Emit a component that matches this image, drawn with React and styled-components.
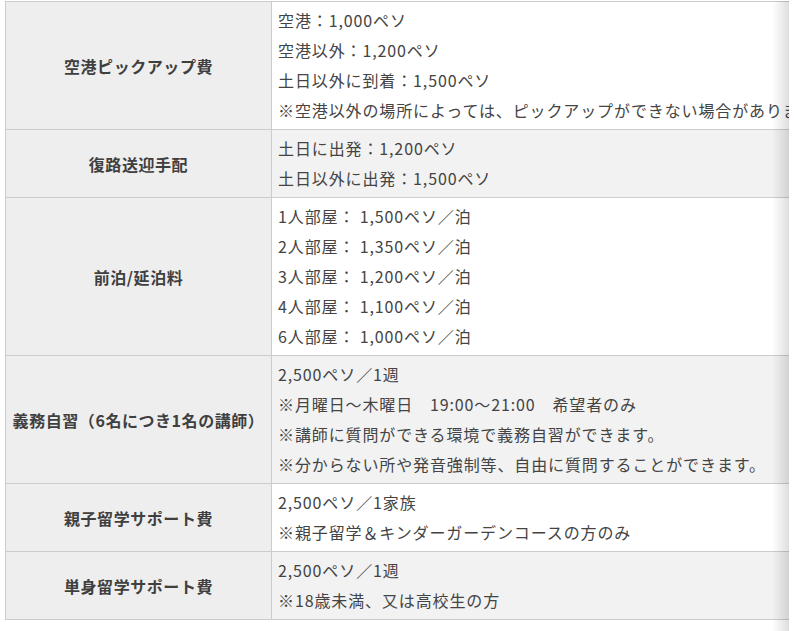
import React from "react";
import styled, { createGlobalStyle } from "styled-components";

const rows = [
  {
    label: "空港ピックアップ費",
    lines: [
      "空港：1,000ペソ",
      "空港以外：1,200ペソ",
      "土日以外に到着：1,500ペソ",
      "※空港以外の場所によっては、ピックアップができない場合があります。",
    ],
  },
  {
    label: "復路送迎手配",
    lines: ["土日に出発：1,200ペソ", "土日以外に出発：1,500ペソ"],
  },
  {
    label: "前泊/延泊料",
    lines: [
      "1人部屋： 1,500ペソ／泊",
      "2人部屋： 1,350ペソ／泊",
      "3人部屋： 1,200ペソ／泊",
      "4人部屋： 1,100ペソ／泊",
      "6人部屋： 1,000ペソ／泊",
    ],
  },
  {
    label: "義務自習（6名につき1名の講師）",
    lines: [
      "2,500ペソ／1週",
      "※月曜日～木曜日　19:00～21:00　希望者のみ",
      "※講師に質問ができる環境で義務自習ができます。",
      "※分からない所や発音強制等、自由に質問することができます。",
    ],
  },
  {
    label: "親子留学サポート費",
    lines: ["2,500ペソ／1家族", "※親子留学＆キンダーガーデンコースの方のみ"],
  },
  {
    label: "単身留学サポート費",
    lines: ["2,500ペソ／1週", "※18歳未満、又は高校生の方"],
  },
];

const App = () => {
  return (
    <>
      <GlobalStyle />
      <Page>
        <ScrollArea>
          <FeeTable>
            <tbody>
              {rows.map((row, i) => (
                <tr key={row.label}>
                  <HeadCell>{row.label}</HeadCell>
                  <BodyCell striped={i % 2 === 1}>
                    {row.lines.map((line) => (
                      <Line key={line}>{line}</Line>
                    ))}
                  </BodyCell>
                </tr>
              ))}
            </tbody>
          </FeeTable>
          <EdgeShadow />
        </ScrollArea>
      </Page>
    </>
  );
};

export default App;

const GlobalStyle = createGlobalStyle`
  body {
    margin: 0;
    background: #fff;
    font-family: "Noto Sans CJK JP", "Noto Sans", sans-serif;
  }
`;

const Page = styled.div`
  padding: 1px 8px 0 5px;
`;

const ScrollArea = styled.div`
  position: relative;
  overflow: hidden;
  padding-bottom: 20px;
`;

const FeeTable = styled.table`
  border-collapse: collapse;
  white-space: nowrap;
  color: #444;
  font-size: 16px;
  letter-spacing: 0.055em;
`;

const HeadCell = styled.th`
  width: 253px;
  min-width: 253px;
  max-width: 253px;
  background: #eeeeee;
  border: 1px solid #cccccc;
  text-align: center;
  vertical-align: middle;
  font-weight: 700;
  color: #3f3f3f;
  padding: 0 6px;
  letter-spacing: 0.035em;
`;

const BodyCell = styled.td`
  background: ${(props) => (props.striped ? "#f2f2f2" : "#ffffff")};
  border: 1px solid #cccccc;
  padding: 3px 40px 4px 6px;
  vertical-align: top;
`;

const Line = styled.div`
  line-height: 30px;
`;

const EdgeShadow = styled.div`
  position: absolute;
  top: 0;
  right: 0;
  bottom: 0;
  width: 17px;
  background: linear-gradient(to right, rgba(0, 0, 0, 0), rgba(0, 0, 0, 0.13));
  pointer-events: none;
`;
